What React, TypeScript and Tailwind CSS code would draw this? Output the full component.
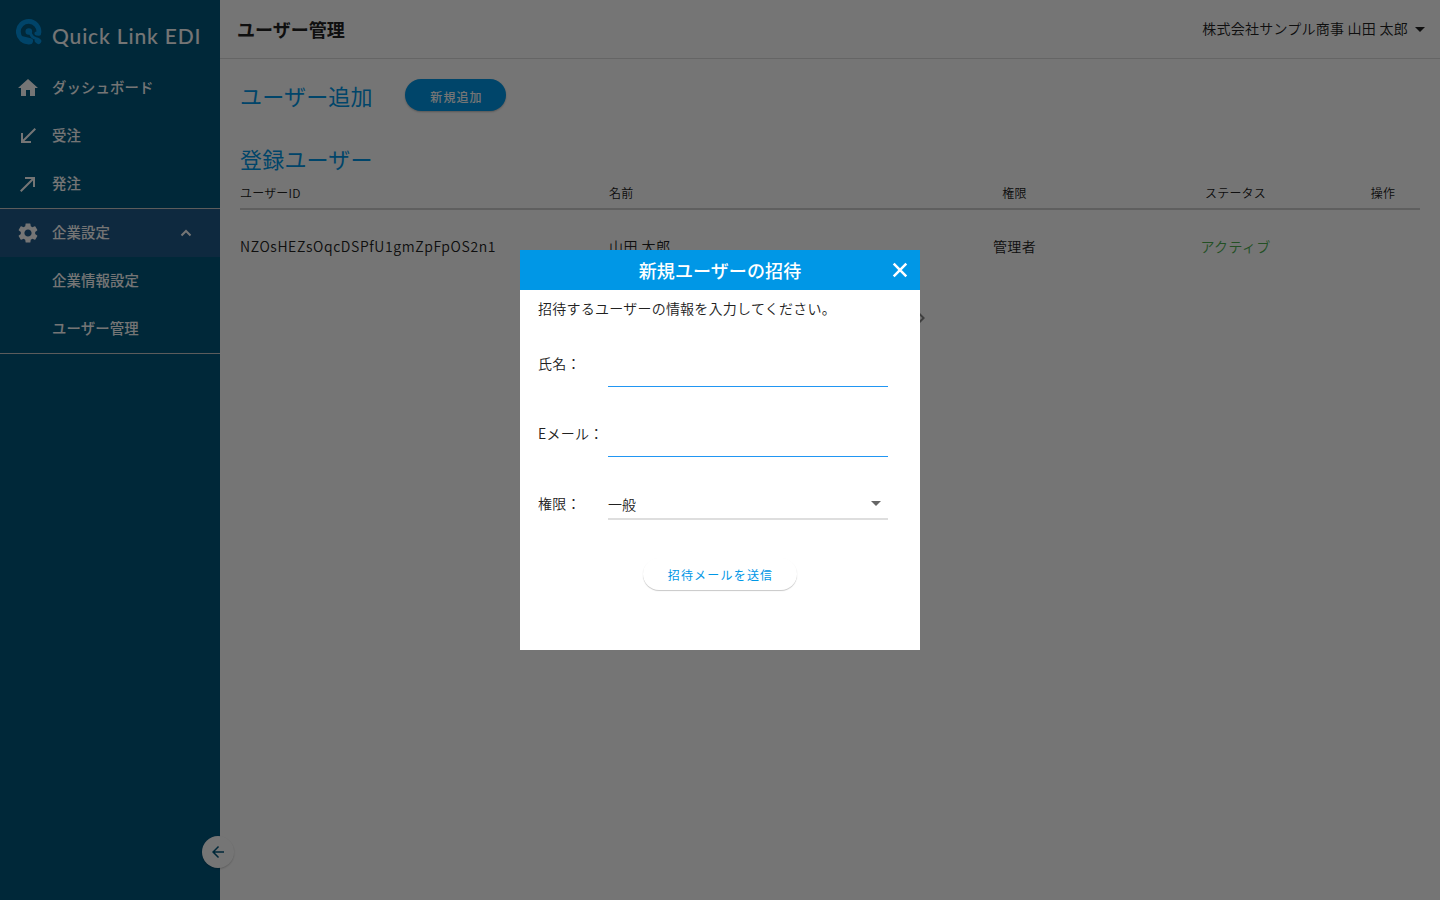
import type { ReactNode } from 'react';
import { MdArrowBack, MdArrowDropDown, MdCallMade, MdCallReceived, MdChevronRight, MdHome, MdSettings } from 'react-icons/md';

interface User {
  id: string;
  name: string;
  role: string;
  status: string;
}

const users: User[] = [
  { id: 'NZOsHEZsOqcDSPfU1gmZpFpOS2n1', name: '山田 太郎', role: '管理者', status: 'アクティブ' },
];

function Logo() {
  return (
    <div className="flex h-16 shrink-0 pl-4">
      <svg viewBox="0 0 26 26" className="mt-[19px] h-[26px] w-[26px] text-[#0095e5]" fill="none" stroke="currentColor" strokeLinecap="round">
        <path d="M13 23A10.300 10.300 0 1 1 22.900 13.500" strokeWidth="4.800" />
        <path d="M7 20.300l7 1.900" strokeWidth="6" />
        <circle cx="12.800" cy="12.500" r="3.300" fill="currentColor" stroke="none" />
        <path d="M13 12.800c2.500 1.500 1 5 6.500 6.500" strokeWidth="2.800" />
        <path d="M21.500 21.500l1 .7" strokeWidth="5.600" />
        <path d="M20.500 14.500l2.500 .2" strokeWidth="4.200" />
      </svg>
      <span className="ml-[10px] mt-5 whitespace-nowrap font-['Lato',sans-serif] text-[21px] font-medium leading-8 tracking-[0.85px]">
        Quick Link EDI
      </span>
    </div>
  );
}

function NavItem({ icon, label, active }: { icon?: ReactNode; label: string; active?: boolean }) {
  return (
    <a
      href="#"
      className={`flex h-12 items-center pl-4 text-[14.4px] font-medium tracking-[0.1px] ${active ? 'bg-[#205a8a]' : ''}`}
    >
      <span className="mr-3 flex w-6 justify-center text-2xl">{icon}</span>
      <span className="flex-1 pb-0.5">{label}</span>
      {active && (
        <svg viewBox="0 0 20 20" className="mr-6 h-5 w-5" fill="none" stroke="currentColor" strokeWidth="2">
          <path d="M5.500 12.500L10 8l4.500 4.500" />
        </svg>
      )}
    </a>
  );
}

function Sidebar() {
  return (
    <aside className="flex w-[220px] shrink-0 flex-col bg-[#00577d] text-white">
      <Logo />
      <nav>
        <NavItem icon={<MdHome />} label="ダッシュボード" />
        <NavItem icon={<MdCallReceived />} label="受注" />
        <NavItem icon={<MdCallMade />} label="発注" />
        <div className="border-y border-[#c8c8c8]">
          <NavItem icon={<MdSettings />} label="企業設定" active />
          <NavItem label="企業情報設定" />
          <NavItem label="ユーザー管理" />
        </div>
      </nav>
    </aside>
  );
}

function UserTable() {
  return (
    <table className="w-[1180px] table-fixed border-collapse">
      <colgroup>
        <col className="w-[368px]" />
        <col className="w-[369px]" />
        <col className="w-[75px]" />
        <col className="w-[367px]" />
        <col className="w-px" />
      </colgroup>
      <thead>
        <tr className="h-8 border-b-2 border-[#cfcfcf] text-xs tracking-[0.2px]">
          <th className="text-left font-[350]">ユーザーID</th>
          <th className="pl-px text-left font-[350]">名前</th>
          <th className="font-[350]">権限</th>
          <th className="font-[350]">ステータス</th>
          <th className="font-[350]">
            <span className="-ml-[49px] block w-[26px] whitespace-nowrap">操作</span>
          </th>
        </tr>
      </thead>
      <tbody>
        {users.map((user) => (
          <tr key={user.id} className="h-[74px] text-sm">
            <td className="pb-0.5 tracking-[0.61px]">{user.id}</td>
            <td className="pb-0.5 pl-px tracking-[0.5px]">{user.name}</td>
            <td className="pb-0.5 text-center tracking-[0.3px]">{user.role}</td>
            <td className="pb-0.5 text-center tracking-[0.3px] text-[#4caf50]">{user.status}</td>
            <td />
          </tr>
        ))}
      </tbody>
    </table>
  );
}

function TextField({ label }: { label: string }) {
  return (
    <label className="flex h-[70px] items-start">
      <span className="w-[70px] shrink-0 whitespace-nowrap pt-[17px] leading-6 tracking-[0.25px]">{label}</span>
      <input type="text" className="h-[53px] w-[280px] border-b border-[#2196f3] outline-none" />
    </label>
  );
}

function InviteDialog() {
  return (
    <div role="dialog" className="h-[400px] w-[400px] bg-white text-sm">
      <header className="flex h-10 items-center bg-[#0097e6] text-white">
        <h2 className="flex-1 pl-10 text-center text-lg font-medium tracking-[0.1px]">新規ユーザーの招待</h2>
        <button type="button" aria-label="閉じる" className="flex w-10 justify-center">
          <svg viewBox="0 0 24 24" className="h-6 w-6" fill="none" stroke="currentColor" strokeWidth="2.500">
            <path d="M5.700 5.700l12.600 12.600M18.300 5.700L5.700 18.300" />
          </svg>
        </button>
      </header>
      <div className="pl-[18px] pt-1.5">
        <p className="h-[38px] leading-6 tracking-[0.24px]">招待するユーザーの情報を入力してください。</p>
        <TextField label="氏名：" />
        <TextField label="Eメール：" />
        <div className="flex items-start">
          <span className="w-[70px] shrink-0 pt-[17px] leading-6 tracking-[0.25px]">権限：</span>
          <div className="flex h-[46px] w-[280px] items-center border-b-2 border-[#dedede] pt-4">
            <span className="flex-1">一般</span>
            <MdArrowDropDown className="mb-0.5 text-2xl text-[#666]" />
          </div>
        </div>
      </div>
      <button
        type="button"
        className="mx-auto mt-[38px] block h-8 w-[154px] rounded-full pl-px pt-0.5 text-xs font-normal tracking-[1.2px] text-[#0097e6] shadow-[0_1px_1px_rgba(0,0,0,0.22)]"
      >
        招待メールを送信
      </button>
    </div>
  );
}

export default function App() {
  return (
    <div className="relative flex h-[900px] w-[1440px] overflow-hidden bg-white font-['Noto_Sans_CJK_JP',sans-serif] font-[350] text-[#212121]">
      <Sidebar />
      <div className="flex flex-1 flex-col">
        <header className="flex h-[59px] items-center justify-between border-b border-[#dcdcdc] pl-[17px] pr-2">
          <h1 className="text-lg font-bold">ユーザー管理</h1>
          <button type="button" className="flex items-center text-sm tracking-[0.25px]">
            <span className="pb-0.5">株式会社サンプル商事 山田 太郎</span>
            <MdArrowDropDown className="text-2xl" />
          </button>
        </header>
        <main className="px-5">
          <div className="flex h-20 items-start pt-5">
            <h2 className="w-[165px] text-[22px] font-normal leading-8 tracking-[0.2px] text-[#0097e6]">ユーザー追加</h2>
            <button
              type="button"
              className="h-8 w-[101px] rounded-full bg-[#0097e6] pl-0.5 pt-[3px] text-xs font-medium tracking-[1.1px] text-white shadow-[0_1px_2px_rgba(0,0,0,0.25)]"
            >
              新規追加
            </button>
          </div>
          <h2 className="text-[22px] font-normal leading-[38px] tracking-[0.2px] text-[#0097e6]">登録ユーザー</h2>
          <UserTable />
          <div className="flex justify-center pl-[2px] pt-[23px]">
            <MdChevronRight className="ml-[180px] text-2xl text-[#8a8a8a]" />
          </div>
        </main>
      </div>
      <button
        type="button"
        aria-label="メニューを閉じる"
        className="absolute left-[202px] top-[836px] flex h-8 w-8 items-center justify-center rounded-full bg-white text-[#00577d] shadow-[0_1px_2px_rgba(0,0,0,0.2)]"
      >
        <MdArrowBack className="text-[18px]" />
      </button>
      <div className="absolute inset-0 flex items-center justify-center bg-black/54">
        <InviteDialog />
      </div>
    </div>
  );
}
